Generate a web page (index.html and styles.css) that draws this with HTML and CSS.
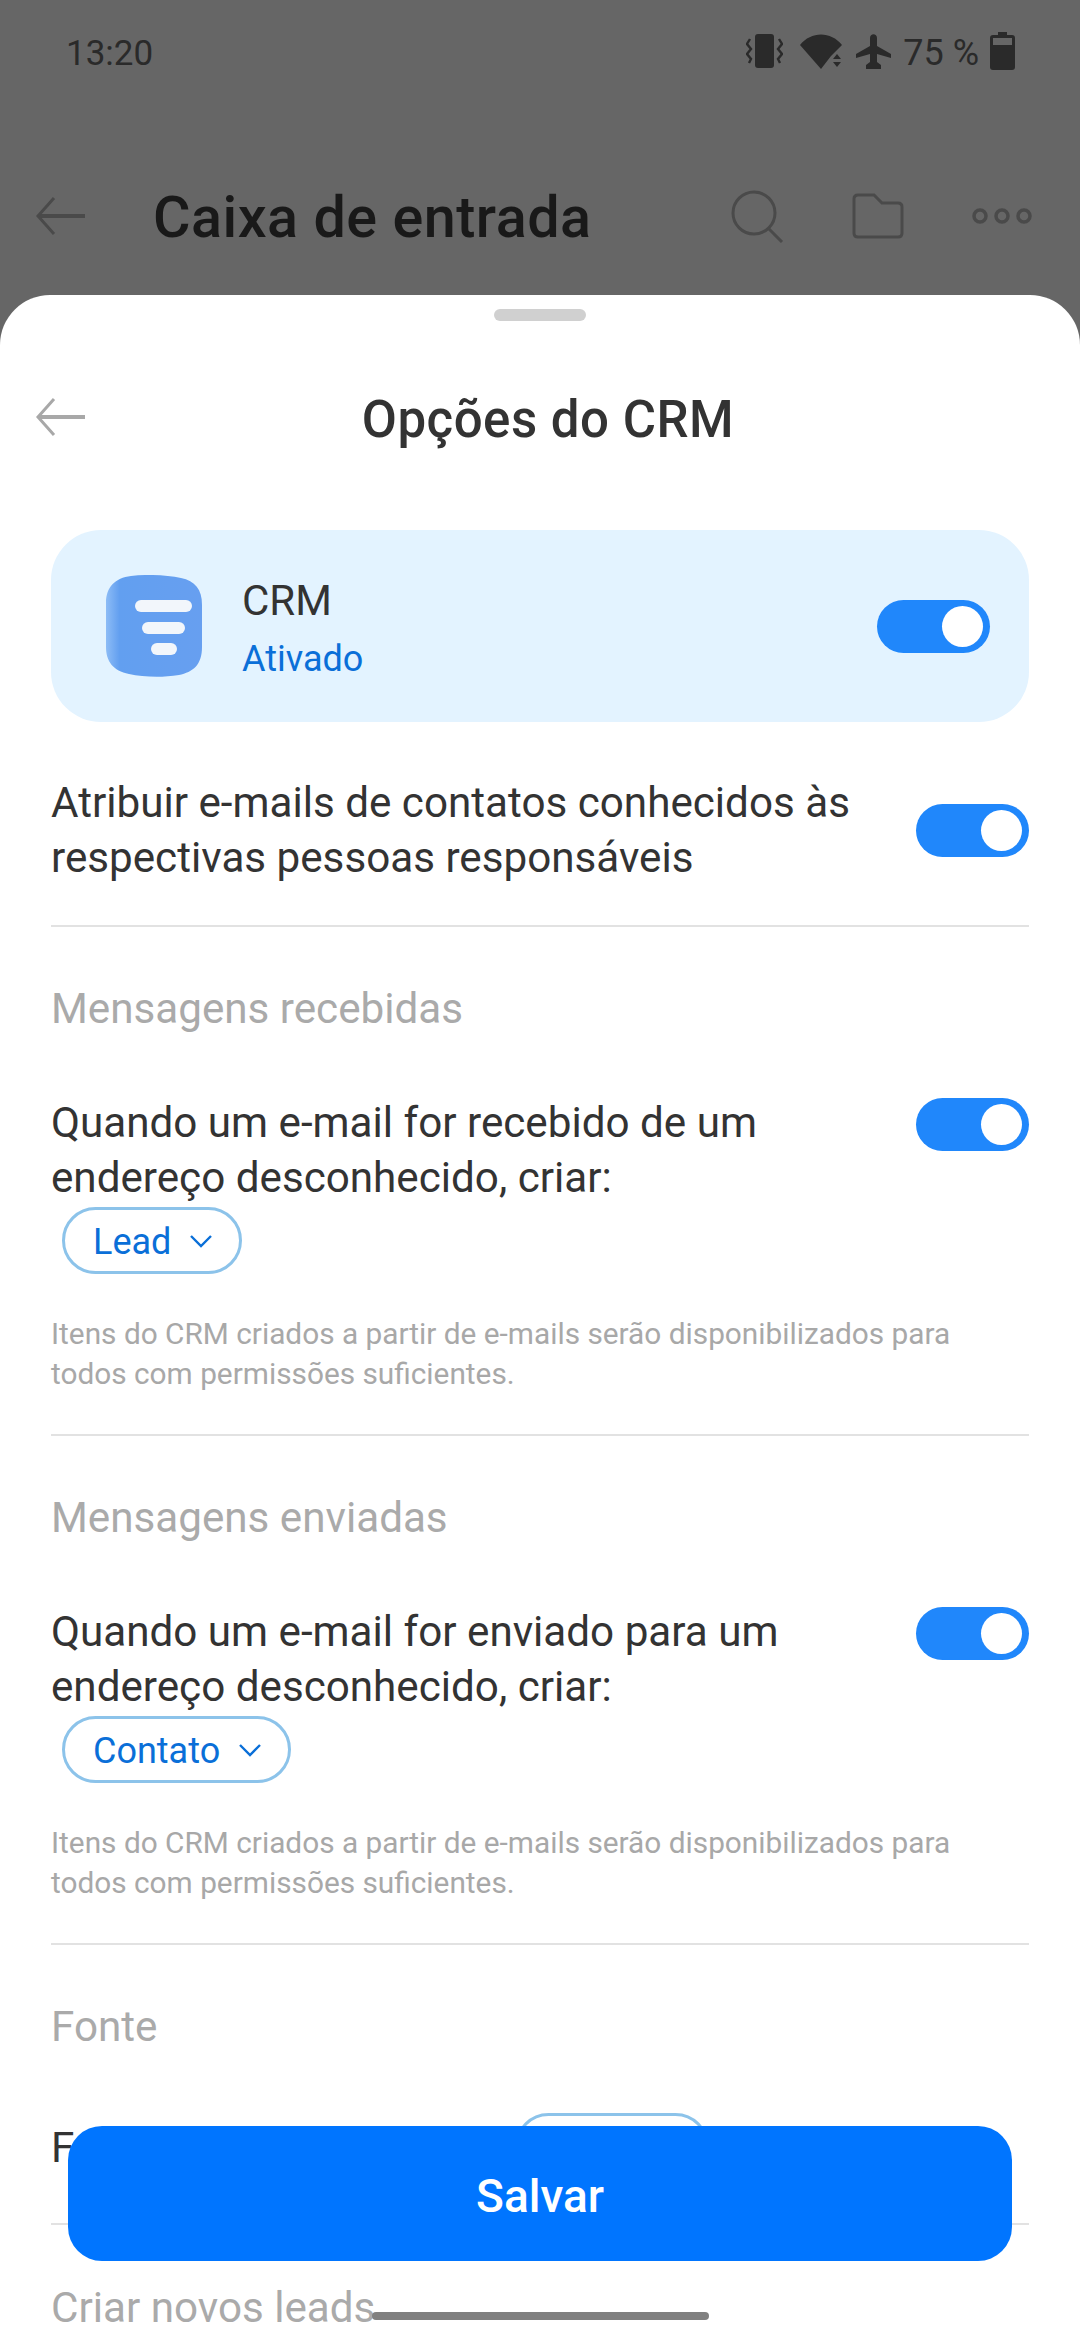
FILE: index.html
```html
<!DOCTYPE html>
<html lang="pt">
<head>
  <meta charset="UTF-8" />
  <meta name="viewport" content="width=device-width, initial-scale=1.0"/>
  <title>Opções do CRM</title>
  <link rel="stylesheet" href="styles.css">
</head>
<body>
  <div class="screen">
    <div class="backdrop">
      <div class="status-bar">
        <span class="status-time">13:20</span>
        <div class="status-icons">
          <svg class="ic-vibrate" width="37" height="34" viewBox="0 0 37 34">
            <rect x="9" y="0" width="19" height="34" rx="3" fill="#2a2a2a"/>
            <path d="M4 5 L1 10 L5 15 L1 20 L5 25 L3 29 M33 5 L36 10 L32 15 L36 20 L32 25 L34 29" fill="none" stroke="#2a2a2a" stroke-width="2.4"/>
          </svg>
          <svg class="ic-wifi" width="43" height="35" viewBox="0 0 43 35">
            <path d="M0 11 C11 -3 31 -3 42 11 L31 22 L21 35 Z" fill="#2a2a2a"/>
            <path d="M37 20 L41 25 L33 25 Z M33 28 L41 28 L37 33 Z" fill="#2a2a2a"/>
          </svg>
          <svg class="ic-plane" width="35" height="35" viewBox="0 0 35 35">
            <path d="M14 4 C14 -1 21 -1 21 4 V12 L35 20 V24 L21 20 V28 L25 31 V35 H10 V31 L14 28 V20 L0 24 V20 L14 12 Z" fill="#2a2a2a"/>
          </svg>
          <span class="status-pct">75 %</span>
          <svg class="ic-battery" width="25" height="38" viewBox="0 0 25 38">
            <path d="M8 0 H17 V3 H22 Q25 3 25 6 V35 Q25 38 22 38 H3 Q0 38 0 35 V6 Q0 3 3 3 H8 Z" fill="#2a2a2a"/>
            <rect x="3" y="6" width="19" height="7" fill="#666"/>
          </svg>
        </div>
      </div>
      <div class="app-bar">
        <svg class="back" width="50" height="38" viewBox="0 0 50 38">
          <path d="M49 19 H3" fill="none" stroke="#4a4a4a" stroke-width="4"/>
          <path d="M18 1 L2 19 L18 37" fill="none" stroke="#4a4a4a" stroke-width="3"/>
        </svg>
        <h1 class="app-title">Caixa de entrada</h1>
        <div class="app-actions">
          <svg width="54" height="54" viewBox="0 0 54 54">
            <circle cx="24" cy="24" r="21" fill="none" stroke="#4a4a4a" stroke-width="3"/>
            <path d="M38 39 L52 53" fill="none" stroke="#4a4a4a" stroke-width="3"/>
          </svg>
          <svg width="52" height="46" viewBox="0 0 52 46">
            <path d="M2 6 Q2 2 6 2 H22 L30 10 H46 Q50 10 50 14 V40 Q50 44 46 44 H6 Q2 44 2 40 Z" fill="none" stroke="#4a4a4a" stroke-width="3"/>
          </svg>
          <svg width="60" height="16" viewBox="0 0 60 16">
            <circle cx="8" cy="8" r="6" fill="none" stroke="#4a4a4a" stroke-width="3.5"/>
            <circle cx="30" cy="8" r="6" fill="none" stroke="#4a4a4a" stroke-width="3.5"/>
            <circle cx="52" cy="8" r="6" fill="none" stroke="#4a4a4a" stroke-width="3.5"/>
          </svg>
        </div>
      </div>
    </div>

    <div class="sheet">
      <div class="handle"></div>
      <div class="sheet-head">
        <svg class="back sheet-back" width="50" height="38" viewBox="0 0 50 38">
          <path d="M49 19 H3" fill="none" stroke="#a8a8a8" stroke-width="4"/>
          <path d="M18 1 L2 19 L18 37" fill="none" stroke="#a8a8a8" stroke-width="3"/>
        </svg>
        <h2 class="sheet-title">Opções do CRM</h2>
      </div>

      <div class="content">
        <div class="crm-card">
          <svg class="crm-logo" width="98" height="102" viewBox="0 0 98 102">
            <defs>
              <linearGradient id="logoFill" x1="0" y1="0" x2="1" y2="0">
                <stop offset="0" stop-color="#8dbcf6"/>
                <stop offset="0.14" stop-color="#629ff0"/>
                <stop offset="1" stop-color="#679ff0"/>
              </linearGradient>
            </defs>
            <path d="M26 1 C42 -1 62 0 76 3 C90 6 97 14 97 30 V72 C97 90 88 97 74 100 C56 103 38 102 24 99 C8 96 1 86 1 72 V28 C1 12 10 3 26 1 Z" fill="url(#logoFill)"/>
            <rect x="30" y="25" width="57" height="12" rx="6" fill="#f2f6fb"/>
            <rect x="37" y="47" width="43" height="12" rx="6" fill="#f2f6fb"/>
            <rect x="46" y="68" width="26" height="12" rx="6" fill="#f2f6fb"/>
          </svg>
          <div class="crm-text">
            <div class="crm-name">CRM</div>
            <div class="crm-state">Ativado</div>
          </div>
          <div class="toggle"><div class="knob"></div></div>
        </div>

        <div class="row row-center">
          <div class="row-text">Atribuir e-mails de contatos conhecidos às respectivas pessoas responsáveis</div>
          <div class="toggle"><div class="knob"></div></div>
        </div>
        <div class="divider"></div>

        <div class="label">Mensagens recebidas</div>
        <div class="row">
          <div class="row-text">Quando um e-mail for recebido de um endereço desconhecido, criar:</div>
          <div class="toggle"><div class="knob"></div></div>
        </div>
        <div class="chip">Lead
          <svg width="22" height="13" viewBox="0 0 22 13"><path d="M1 1 L11 11 L21 1" fill="none" stroke="#0a6fd8" stroke-width="2.4"/></svg>
        </div>
        <p class="help">Itens do CRM criados a partir de e-mails serão disponibilizados para todos com permissões suficientes.</p>
        <div class="divider"></div>

        <div class="label">Mensagens enviadas</div>
        <div class="row">
          <div class="row-text">Quando um e-mail for enviado para um endereço desconhecido, criar:</div>
          <div class="toggle"><div class="knob"></div></div>
        </div>
        <div class="chip">Contato
          <svg width="22" height="13" viewBox="0 0 22 13"><path d="M1 1 L11 11 L21 1" fill="none" stroke="#0a6fd8" stroke-width="2.4"/></svg>
        </div>
        <p class="help">Itens do CRM criados a partir de e-mails serão disponibilizados para todos com permissões suficientes.</p>
        <div class="divider"></div>

        <div class="label">Fonte</div>
        <div class="source-row">
          <div class="row-text">Fonte</div>
          <div class="source-chip"></div>
        </div>
        <div class="divider"></div>
        <div class="label label-last">Criar novos leads</div>
      </div>
    </div>

    <button class="save" type="button">Salvar</button>
    <div class="home-bar"></div>
  </div>
</body>
</html>
```

FILE: styles.css
```css
* { box-sizing: border-box; }
html, body { margin: 0; padding: 0; }
body { font-family: Roboto, "Noto Sans", sans-serif; background: #666; }

.screen { position: relative; width: 1080px; height: 2340px; overflow: hidden; background: #666; display: flex; flex-direction: column; }

/* dimmed page behind the sheet */
.backdrop { height: 295px; flex-shrink: 0; }
.status-bar { height: 104px; padding: 32px 65px 0 66px; display: flex; justify-content: space-between; align-items: flex-start; }
.status-time { font-size: 35px; line-height: 41px; color: #2a2a2a; padding-top: 1px; }
.status-icons { display: flex; align-items: center; height: 38px; }
.status-pct { font-size: 36px; line-height: 38px; color: #2a2a2a; margin: 3px 11px 0 12px; white-space: nowrap; }
.ic-vibrate { margin-right: 17px; }
.ic-wifi { margin-right: 13px; }

.app-bar { display: flex; align-items: center; padding: 0 48px 0 36px; height: 76px; margin-top: 74px; }
.app-title { margin: 3px 0 0 67px; font-size: 57.5px; line-height: 60px; font-weight: 500; color: #191919; letter-spacing: 0.5px; white-space: nowrap; }
.app-actions { margin-left: auto; display: flex; align-items: center; gap: 68px; }

/* bottom sheet */
.sheet { flex: 1; background: #fff; border-radius: 50px 50px 0 0; min-height: 0; }
.handle { width: 92px; height: 12px; border-radius: 6px; background: #d0d0d0; margin: 14px auto 0; }
.sheet-head { position: relative; height: 100px; margin-top: 49px; display: flex; align-items: center; justify-content: center; }
.sheet-back { position: absolute; left: 36px; top: 28px; }
.sheet-title { margin: 0 0 0 16px; font-size: 51px; line-height: 60px; font-weight: 500; color: #333; letter-spacing: 0.5px; }

.content { padding: 0 51px; margin-top: 60px; }

.crm-card { height: 192px; background: #e3f3ff; border-radius: 50px; display: flex; align-items: center; padding: 0 39px 0 54px; margin-bottom: 53px; }
.crm-logo { flex-shrink: 0; margin-right: 39px; }
.crm-text { padding-top: 8px; }
.crm-name { font-size: 42px; line-height: 50px; color: #333; }
.crm-state { font-size: 36px; line-height: 50px; margin-top: 8px; color: #0a6fd8; }
.crm-card .toggle { margin-left: auto; margin-top: 0; }

.toggle { width: 113px; height: 53px; border-radius: 27px; background: #2087fb; flex-shrink: 0; padding: 6px 7px; display: flex; justify-content: flex-end; margin-top: 3px; }
.knob { width: 41px; height: 41px; border-radius: 50%; background: #fff; }

.row { display: flex; justify-content: space-between; align-items: flex-start; }
.row-center { align-items: center; }
.row-center .toggle { margin-top: 0; }
.row-text { width: 810px; font-size: 42.2px; line-height: 55px; color: #333; }

.divider { height: 2px; background: #e2e2e2; }
.row + .divider { margin-top: 40px; }

.label { font-size: 42.2px; line-height: 55px; color: #aaa; margin: 54px 0 59px; }
.label-last { margin-top: 55px; }

.chip { display: inline-flex; align-items: center; height: 67px; margin: 2px 0 0 11px; padding: 2px 27px 0 28px; border: 3px solid #8cc3ea; border-radius: 34px; font-size: 36px; color: #0a6fd8; gap: 19px; }
.help { margin: 40px 0 40px; font-size: 29.8px; line-height: 40px; color: #a8a8a8; width: 930px; }

.source-row { position: relative; height: 103px; margin-top: 66px; }
.source-chip { position: absolute; left: 464px; top: -7px; width: 194px; height: 67px; border: 3px solid #8cc3ea; border-radius: 34px; }

/* floating bits over the sheet */
.save { position: absolute; left: 68px; top: 2126px; width: 944px; height: 135px; padding-top: 5px; border: none; border-radius: 34px; background: #0075ff; color: #fff; font-family: Roboto, "Noto Sans", sans-serif; font-size: 46px; font-weight: 500; }
.home-bar { position: absolute; left: 372px; top: 2312px; width: 337px; height: 8px; border-radius: 4px; background: #808080; }
```
